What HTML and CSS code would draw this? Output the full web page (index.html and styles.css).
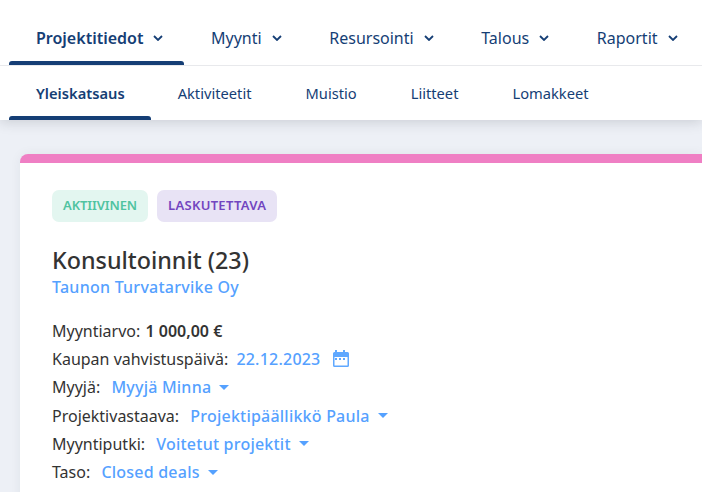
FILE: index.html
```html
<!DOCTYPE html>
<html lang="en">
<head>
    <meta charset="UTF-8">
    <meta name="viewport" content="width=device-width, initial-scale=1.0">
    <title>Konsultoinnit (23)</title>
    <link rel="stylesheet" href="styles.css">
</head>
<body>

<header class="header">
    <nav class="main-nav">
        <a class="main-link active">Projektitiedot <svg class="chevron" viewBox="0 0 10 6"><path d="M1 1l4 4 4-4"/></svg></a>
        <a class="main-link">Myynti <svg class="chevron" viewBox="0 0 10 6"><path d="M1 1l4 4 4-4"/></svg></a>
        <a class="main-link">Resursointi <svg class="chevron" viewBox="0 0 10 6"><path d="M1 1l4 4 4-4"/></svg></a>
        <a class="main-link">Talous <svg class="chevron" viewBox="0 0 10 6"><path d="M1 1l4 4 4-4"/></svg></a>
        <a class="main-link">Raportit <svg class="chevron" viewBox="0 0 10 6"><path d="M1 1l4 4 4-4"/></svg></a>
    </nav>
    <nav class="sub-nav">
        <a class="sub-link active">Yleiskatsaus</a>
        <a class="sub-link">Aktiviteetit</a>
        <a class="sub-link">Muistio</a>
        <a class="sub-link">Liitteet</a>
        <a class="sub-link">Lomakkeet</a>
    </nav>
</header>

<main class="content">
    <section class="card">
        <div class="badges">
            <span class="badge badge-green">AKTIIVINEN</span>
            <span class="badge badge-purple">LASKUTETTAVA</span>
        </div>
        <h1 class="title">Konsultoinnit (23)</h1>
        <a class="customer">Taunon Turvatarvike Oy</a>
        <div class="fields">
            <div class="field">Myyntiarvo: <strong>1 000,00 €</strong></div>
            <div class="field">Kaupan vahvistuspäivä: <a class="value">22.12.2023</a>
                <svg class="calendar" viewBox="0 0 16 18">
                    <path class="calendar-frame" d="M2 0h2v2h6V0h2v2h2.500A1.500 1.500 0 0 1 16 3.500v12a1.500 1.500 0 0 1-1.500 1.500h-13A1.500 1.500 0 0 1 0 15.500v-12A1.500 1.500 0 0 1 1.500 2H2zM1.500 7v8.500h13V7z"/>
                    <rect class="calendar-frame" x="2" y="8" width="2" height="2"/>
                    <rect class="calendar-frame" x="6" y="8" width="2" height="2"/>
                    <rect class="calendar-frame" x="10" y="8" width="2" height="2"/>
                </svg>
            </div>
            <div class="field">Myyjä: <a class="value select">Myyjä Minna</a><span class="caret"></span></div>
            <div class="field">Projektivastaava: <a class="value select">Projektipäällikkö Paula</a><span class="caret"></span></div>
            <div class="field">Myyntiputki: <a class="value select">Voitetut projektit</a><span class="caret"></span></div>
            <div class="field">Taso: <a class="value select">Closed deals</a><span class="caret"></span></div>
        </div>
    </section>
</main>

</body>
</html>
```

FILE: styles.css
```css
html, body {
    height: 100%;
}
body {
    margin: 0;
    overflow: hidden;
    background-color: #edf0f6;
    font-family: "Noto Sans", sans-serif;
    font-size: 16px;
    color: #333;
}
.header {
    background-color: white;
    box-shadow: 0 2px 12px rgba(40, 45, 60, 0.18);
}
.main-nav {
    display: flex;
    height: 65px;
    padding: 0 9px;
    border-bottom: 1px solid #e8e9ec;
}
.main-link {
    position: relative;
    display: flex;
    align-items: center;
    gap: 10px;
    height: 65px;
    padding: 11px 20.600px 0 27px;
    box-sizing: border-box;
    font-size: 16px;
    color: #153e75;
    white-space: nowrap;
}
.main-link.active,
.sub-link.active {
    font-weight: 600;
}
.main-link.active::after,
.sub-link.active::after {
    content: "";
    position: absolute;
    left: 0;
    right: 0;
    bottom: 0;
    height: 4px;
    background-color: #153e75;
    border-radius: 3px 3px 0 0;
}
.chevron {
    width: 10px;
    height: 6px;
    fill: none;
    stroke: #153e75;
    stroke-width: 1.8;
}
.sub-nav {
    display: flex;
    height: 54px;
    padding: 0 9px;
}
.sub-link {
    position: relative;
    display: flex;
    align-items: center;
    height: 54px;
    padding: 0 27px;
    box-sizing: border-box;
    font-size: 14.700px;
    color: #153e75;
}
.sub-link.active {
    padding-right: 26px;
}
.content {
    padding: 34px 0 0 20px;
}
.card {
    height: 400px;
    padding: 27px 32px;
    background-color: white;
    border-top: 9px solid #ef7fc4;
    border-radius: 8px 0 0 0;
    box-shadow: 0 0 12px rgba(40, 45, 60, 0.06);
}
.badges {
    display: flex;
    gap: 9px;
}
.badge {
    padding: 0 11px;
    height: 32px;
    line-height: 31px;
    border-radius: 7px;
    font-size: 13px;
    font-weight: 600;
}
.badge-green {
    background-color: #e3f6f0;
    color: #4fc3a0;
    letter-spacing: -0.100px;
}
.badge-purple {
    background-color: #e8e3f5;
    color: #7245c0;
    letter-spacing: 0.300px;
}
.title {
    margin: 23px 0 0;
    font-size: 23.300px;
    font-weight: 500;
    line-height: 30px;
}
.customer {
    display: block;
    margin-top: 1px;
    font-size: 16px;
    font-weight: 500;
    line-height: 22px;
    letter-spacing: 0.250px;
    color: #55a1ff;
}
.fields {
    margin-top: 19px;
}
.field {
    display: flex;
    align-items: center;
    height: 28.200px;
    white-space: pre;
}
.field strong {
    font-weight: 600;
    margin-left: 1px;
}
.value {
    margin-left: 4px;
    font-weight: 500;
    letter-spacing: 0.220px;
    color: #55a1ff;
}
.value.select {
    margin-left: 7px;
}
.caret {
    margin-left: 8px;
    border-left: 5px solid transparent;
    border-right: 5px solid transparent;
    border-top: 5px solid #55a1ff;
}
.calendar {
    width: 16px;
    height: 18px;
    margin-left: 12px;
}
.calendar-frame {
    fill: #5fa8ff;
    fill-rule: evenodd;
}
```
